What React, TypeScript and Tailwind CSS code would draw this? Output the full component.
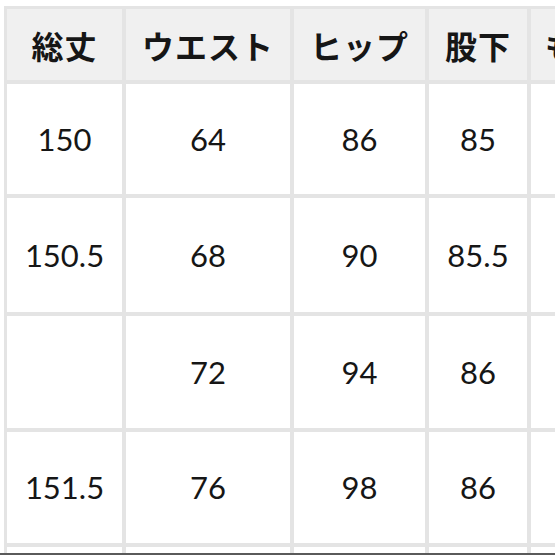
const headers = ['総丈', 'ウエスト', 'ヒップ', '股下', 'もも'];

const rows = [
  ['150', '64', '86', '85', ''],
  ['150.5', '68', '90', '85.5', ''],
  ['', '72', '94', '86', ''],
  ['151.5', '76', '98', '86', ''],
  ['', '', '', '', ''],
];

export default function App() {
  return (
    <div className="w-[555px] h-[555px] overflow-hidden bg-white border-b-2 border-[#5a5a5a]">
      <div className="ml-[4px] mt-[6px] w-[600px] p-[3px] bg-[#e4e4e4] grid grid-cols-[115px_164px_131px_98px_120px] grid-rows-[71px_110px_114px_112px_111px_100px] gap-x-[4px] gap-y-[4px]">
        {headers.map((h, j) => (
          <div
            key={h}
            className={
              j === 4
                ? 'bg-[#f0f0f0] flex items-center justify-start pl-[14px] text-[32px] font-bold text-[#161616] tracking-[1px]'
                : 'bg-[#f0f0f0] flex items-center justify-center text-[32px] font-bold text-[#161616] tracking-[1px]'
            }
            style={{ fontFamily: '"Noto Sans CJK JP", "Noto Sans", sans-serif' }}
          >
            {h}
          </div>
        ))}
        {rows.map((r, i) =>
          r.map((v, j) => (
            <div
              key={`${i}-${j}`}
              className="bg-white flex items-center justify-center text-[31px] text-[#161616]"
              style={{ fontFamily: 'Lato, "Noto Sans", sans-serif' }}
            >
              {v}
            </div>
          ))
        )}
      </div>
    </div>
  );
}
